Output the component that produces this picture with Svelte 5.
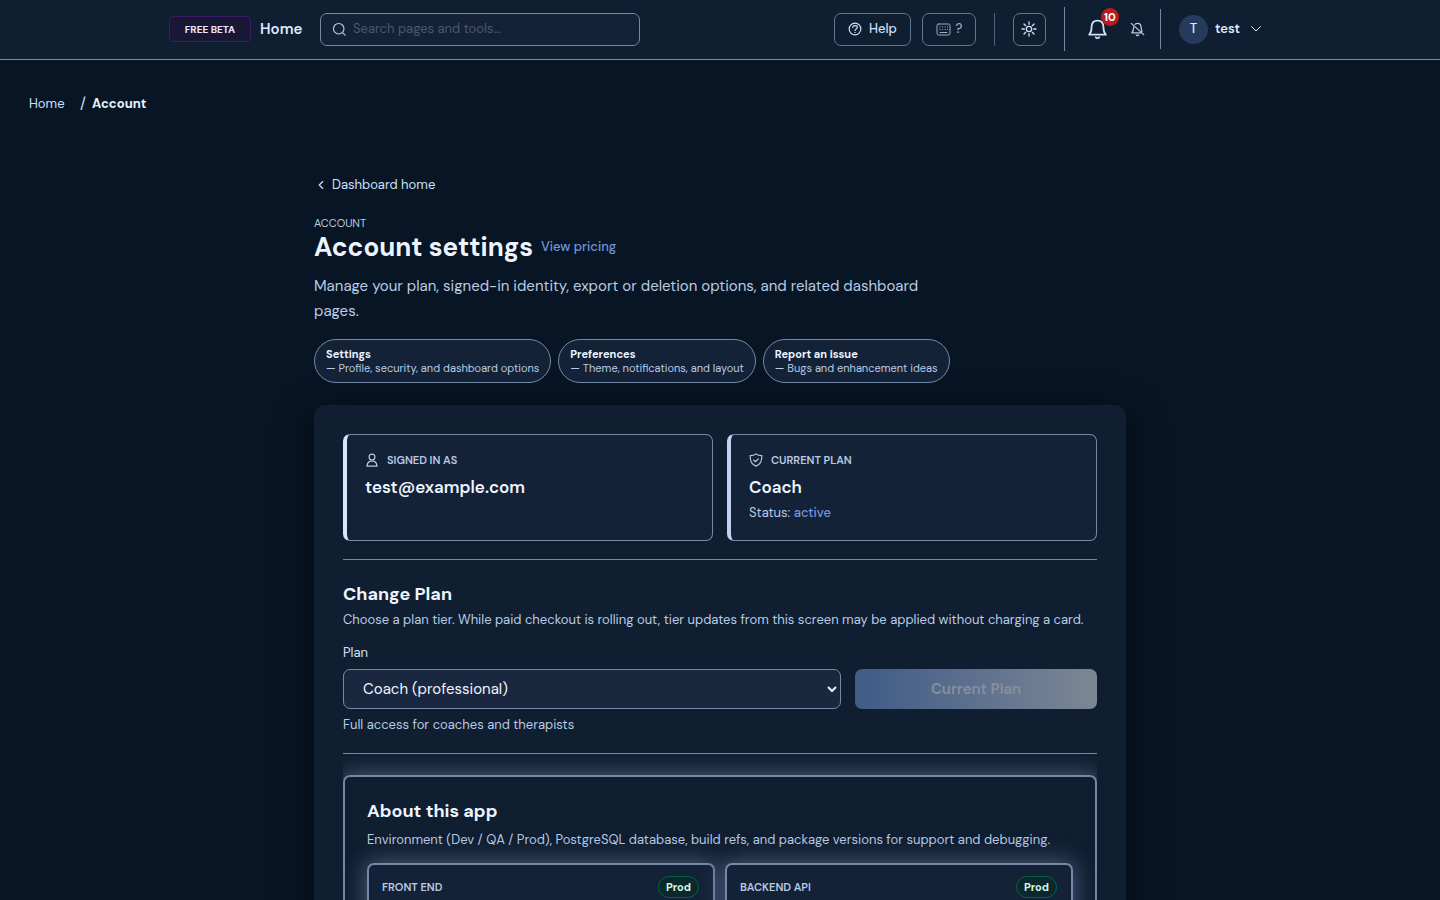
<script>
	const quickLinks = [
		{ title: 'Settings', text: 'Profile, security, and dashboard options' },
		{ title: 'Preferences', text: 'Theme, notifications, and layout' },
		{ title: 'Report an issue', text: 'Bugs and enhancement ideas' }
	];

	const plans = [
		{ id: 'coach', label: 'Coach (professional)', hint: 'Full access for coaches and therapists' }
	];

	const builds = [
		{ name: 'Front end', env: 'Prod' },
		{ name: 'Backend API', env: 'Prod' }
	];

	let search = $state('');
	let planId = $state('coach');
	let currentPlan = 'coach';
	let selected = $derived(plans.find((p) => p.id === planId));
</script>

<svelte:head>
	<title>Account settings</title>
</svelte:head>

<div class="page">
	<header class="topbar">
		<div class="topbar-inner">
			<span class="beta">FREE BETA</span>
			<a class="brand" href="/">Home</a>
			<label class="search">
				<svg class="icon" width="14" height="14" viewBox="0 0 24 24" aria-hidden="true">
					<circle cx="11.500" cy="11.500" r="9" />
					<path d="M18.500 18.500l4 4" />
				</svg>
				<input type="search" bind:value={search} placeholder="Search pages and tools…" aria-label="Search pages and tools" />
			</label>

			<div class="actions">
				<button class="btn help">
					<svg class="icon" width="14" height="14" viewBox="0 0 24 24" aria-hidden="true">
						<circle cx="12" cy="12" r="10" />
						<path d="M8 9.500c.2-2 1.800-3.200 4-3.200s4 1.300 4 3.200c0 2.500-4 2.500-4 5M12 17.500v.5" />
					</svg>
					Help
				</button>
				<button class="btn keys" aria-label="Keyboard shortcuts">
					<svg class="icon" width="15" height="13" viewBox="0 0 30 26" aria-hidden="true">
						<rect x="2" y="2" width="26" height="22" rx="3" />
						<path d="M8 8h.5M13 8h.5M18 8h.5M23 8h.5M8 13h.5M13 13h.5M18 13h.5M23 13h.5M8 19h14" />
					</svg>
					?
				</button>
				<span class="rule"></span>
				<button class="btn theme" aria-label="Toggle theme">
					<svg class="icon" width="16" height="16" viewBox="0 0 24 24" aria-hidden="true">
						<circle cx="12" cy="12" r="4" />
						<path d="M12 1.500V5M12 19v3.500M1.500 12H5M19 12h3.500M4.500 4.500L7 7M17 17l2.500 2.500M4.500 19.500L7 17M17 7l2.500-2.500" />
					</svg>
				</button>
				<div class="alerts">
					<button class="bell" aria-label="Notifications">
						<svg class="icon" width="21" height="22" viewBox="0 0 24 24" aria-hidden="true">
							<path d="M2.500 18.500h19c-2-2-2.700-4-2.700-8.500 0-4.500-2.600-7.500-6.800-7.500S5.200 5.500 5.200 10c0 4.500-.7 6.500-2.700 8.500zM10 21.500c.8 1.200 3.200 1.200 4 0" />
						</svg>
						<span class="count">10</span>
					</button>
					<button class="mute" aria-label="Mute notifications">
						<svg class="icon" width="15" height="16" viewBox="0 0 24 24" aria-hidden="true">
							<path d="M2 3l20 18M6 8.500c-.3 4.500-.5 7-3 9.500h15M8 4.500c5-3.500 9.500-.8 9.800 4.500.1 3 .4 5 1.400 7M10 21.500c.8 1.200 3.200 1.200 4 0" />
						</svg>
					</button>
				</div>
				<button class="user">
					<span class="avatar">T</span>
					test
					<svg class="icon chevron" width="12" height="12" viewBox="0 0 24 24" aria-hidden="true">
						<path d="M3 7l9 9 9-9" />
					</svg>
				</button>
			</div>
		</div>
	</header>

	<nav class="crumbs" aria-label="Breadcrumb">
		<a href="/">Home</a>
		<span class="slash">/</span>
		<strong>Account</strong>
	</nav>

	<main>
		<a class="back" href="/">
			<svg class="icon" width="14" height="14" viewBox="0 0 24 24" aria-hidden="true">
				<path d="M15 6l-6 6 6 6" />
			</svg>
			Dashboard home
		</a>
		<p class="eyebrow">ACCOUNT</p>
		<div class="title-row">
			<h1>Account settings</h1>
			<a href="/pricing">View pricing</a>
		</div>
		<p class="lead">Manage your plan, signed-in identity, export or deletion options, and related dashboard pages.</p>

		<div class="quick-links">
			{#each quickLinks as link}
				<a class="quick-link" href="/account">
					<strong>{link.title}</strong>
					<span>— {link.text}</span>
				</a>
			{/each}
		</div>

		<div class="panel">
			<div class="tiles">
				<section class="tile">
					<h2 class="tile-label">
						<svg class="icon" width="14" height="14" viewBox="0 0 24 24" aria-hidden="true">
							<circle cx="12" cy="7" r="5" />
							<path d="M3.500 22.500h17c0-4-1.500-7-5-8.500h-7c-3.500 1.500-5 4.500-5 8.500z" />
						</svg>
						SIGNED IN AS
					</h2>
					<p class="tile-value">test@example.com</p>
				</section>
				<section class="tile plan">
					<h2 class="tile-label">
						<svg class="icon" width="14" height="14" viewBox="0 0 24 24" aria-hidden="true">
							<path d="M12 1.500c3 2.500 6 3 10 3 .5 9-2 15-10 18-8-3-10.500-9-10-18 4 0 7-.5 10-3zM8 12l3 3 5-5" />
						</svg>
						CURRENT PLAN
					</h2>
					<p class="tile-value">Coach</p>
					<p class="status">Status: <span>active</span></p>
				</section>
			</div>

			<section class="change">
				<h2>Change Plan</h2>
				<p class="note">Choose a plan tier. While paid checkout is rolling out, tier updates from this screen may be applied without charging a card.</p>
				<label class="plan-label" for="plan">Plan</label>
				<div class="plan-row">
					<select id="plan" bind:value={planId}>
						{#each plans as plan}
							<option value={plan.id}>{plan.label}</option>
						{/each}
					</select>
					<button class="submit" disabled={planId === currentPlan}>Current Plan</button>
				</div>
				<p class="note">{selected.hint}</p>
			</section>

			<div class="about-wrap">
				<section class="about">
					<h2>About this app</h2>
					<p class="note">Environment (Dev / QA / Prod), PostgreSQL database, build refs, and package versions for support and debugging.</p>
					<div class="builds">
						{#each builds as build}
							<article class="build">
								<h3>{build.name}</h3>
								<span class="env">{build.env}</span>
							</article>
						{/each}
					</div>
				</section>
			</div>
		</div>
	</main>
</div>

<style>
	:global(body) {
		background: #081524;
	}

	.page {
		--surface: #0f1e30;
		--raised: #142238;
		--line: #7588a5;
		--text: #edf4ff;
		--soft: #b9cbe4;
		--bright: #cfe0f8;
		--link: #7096dc;
		height: 100vh;
		overflow: hidden;
		background: #081524;
		color: var(--soft);
		font-family: 'DM Sans', Inter, 'Open Sans', sans-serif;
		font-size: 13px;
		line-height: 20px;
	}

	.page * {
		box-sizing: border-box;
	}

	h1, h2, h3, p {
		margin: 0;
	}

	a {
		color: inherit;
		text-decoration: none;
	}

	button, input, select {
		font: inherit;
		color: inherit;
	}

	button {
		display: flex;
		align-items: center;
		justify-content: center;
		padding: 0;
		border: none;
		background: none;
		cursor: pointer;
	}

	.icon {
		flex-shrink: 0;
		fill: none;
		stroke: currentColor;
		stroke-width: 2;
		stroke-linecap: round;
		stroke-linejoin: round;
	}

	.topbar {
		height: 60px;
		background: var(--surface);
		border-bottom: 1px solid var(--line);
	}

	.topbar-inner {
		display: flex;
		align-items: center;
		max-width: 1102px;
		height: 58px;
		margin: 0 auto;
	}

	.beta {
		width: 82px;
		height: 26px;
		border: 1px solid #3b1a68;
		border-radius: 4px;
		background: #181735;
		color: #f0e6ff;
		font-size: 10px;
		font-weight: 700;
		line-height: 25px;
		text-align: center;
	}

	.brand {
		width: 60px;
		margin-left: 9px;
		color: #dceaff;
		font-size: 15px;
		font-weight: 600;
		line-height: 18px;
	}

	.search {
		display: flex;
		align-items: center;
		gap: 7px;
		width: 320px;
		height: 33px;
		padding: 0 11px;
		border: 1px solid var(--line);
		border-radius: 7px;
		background: var(--raised);
	}

	.search input {
		flex: 1;
		min-width: 0;
		padding: 0;
		border: none;
		outline: none;
		background: none;
	}

	.search input::placeholder {
		color: #4c5868;
	}

	.actions {
		display: flex;
		align-items: center;
		margin-left: auto;
	}

	.btn {
		height: 33px;
		border: 1px solid #63758f;
		border-radius: 7px;
		background: var(--surface);
		color: var(--bright);
		font-weight: 500;
	}

	.help {
		gap: 7px;
		width: 77px;
	}

	.btn.keys {
		gap: 5px;
		width: 54px;
		margin-left: 11px;
		color: #9aacc6;
	}

	.rule {
		width: 1px;
		height: 33px;
		margin: 0 18px;
		background: #50617a;
	}

	.theme {
		width: 33px;
	}

	.alerts {
		display: flex;
		align-items: center;
		width: 96px;
		height: 44px;
		margin-left: 18px;
		padding-left: 22px;
		border-left: 1px solid var(--line);
		color: var(--bright);
	}

	.bell {
		position: relative;
	}

	.count {
		position: absolute;
		top: -10px;
		right: -11px;
		width: 18px;
		height: 18px;
		border-radius: 50%;
		background: #b91c1c;
		color: #fff;
		font-size: 11px;
		font-weight: 700;
		line-height: 18px;
	}

	.mute {
		margin-left: 22px;
		color: var(--soft);
	}

	.user {
		gap: 7px;
		height: 40px;
		padding: 0 9px 0 18px;
		border-left: 1px solid var(--line);
		color: #dceaff;
		font-weight: 600;
	}

	.avatar {
		width: 29px;
		height: 29px;
		border-radius: 50%;
		background: #263b5b;
		font-weight: 500;
		line-height: 28px;
	}

	.chevron {
		margin-left: 3px;
	}

	.crumbs {
		display: flex;
		align-items: center;
		padding: 34px 29px 0;
		color: var(--bright);
	}

	.crumbs a {
		width: 51px;
	}

	.slash {
		width: 12px;
		font-size: 15px;
	}

	.crumbs strong {
		color: var(--text);
		font-weight: 700;
	}

	main {
		max-width: 812px;
		margin: 61px auto 0;
	}

	.back {
		display: flex;
		align-items: center;
		gap: 4px;
		color: var(--bright);
	}

	.eyebrow {
		margin-top: 20px;
		font-size: 11px;
		line-height: 16px;
	}

	.title-row {
		display: flex;
		align-items: center;
		gap: 8px;
		height: 32px;
	}

	h1 {
		color: var(--text);
		font-size: 26px;
		font-weight: 700;
		line-height: 32px;
	}

	.title-row a {
		color: var(--link);
		font-weight: 500;
	}

	.lead {
		max-width: 640px;
		margin-top: 11px;
		font-size: 15px;
		line-height: 25px;
	}

	.quick-links {
		display: flex;
		gap: 7px;
		margin-top: 15px;
	}

	.quick-link {
		height: 44px;
		padding: 7px 11px;
		border: 1px solid var(--line);
		border-radius: 22px;
		background: var(--raised);
		font-size: 11px;
		line-height: 14px;
	}

	.quick-link strong,
	.quick-link span {
		display: block;
	}

	.quick-link strong {
		color: var(--text);
		font-weight: 700;
	}

	.panel {
		margin-top: 22px;
		padding: 29px;
		border-radius: 11px;
		background: var(--surface);
		box-shadow: 0 11px 36px rgba(0, 0, 0, 0.6);
	}

	.tiles {
		display: grid;
		grid-template-columns: 1fr 1fr;
		gap: 14px;
		padding-bottom: 18px;
		border-bottom: 1px solid var(--line);
	}

	.tile {
		height: 107px;
		padding: 15px 18px;
		border: 1px solid var(--line);
		border-left: 4px solid #d5e6ff;
		border-radius: 7px;
		background: var(--raised);
	}

	.plan {
		border-left-color: #bfd3f2;
	}

	.tile-label {
		display: flex;
		align-items: center;
		gap: 8px;
		font-size: 11px;
		font-weight: 600;
		line-height: 20px;
	}

	.tile-value {
		margin-top: 5px;
		color: var(--text);
		font-size: 17px;
		font-weight: 600;
		line-height: 24px;
	}

	.status {
		margin-top: 4px;
	}

	.status span {
		color: var(--link);
		font-weight: 500;
	}

	.change {
		padding: 22px 0 18px;
		border-bottom: 1px solid var(--line);
	}

	.change h2,
	.about h2 {
		color: var(--text);
		font-size: 18px;
		font-weight: 700;
		line-height: 24px;
	}

	.change h2 + .note {
		margin-top: 4px;
	}

	.plan-label {
		display: block;
		margin-top: 13px;
		color: var(--bright);
	}

	.plan-row {
		display: grid;
		grid-template-columns: 1fr 242px;
		gap: 14px;
		margin: 6px 0;
	}

	select {
		height: 40px;
		padding: 0 0 0 15px;
		border: 1px solid var(--line);
		border-radius: 7px;
		background: #19273f;
		color: var(--text);
		font-size: 15px;
	}

	.submit {
		border-radius: 7px;
		background: linear-gradient(90deg, #3f5b87, #7c8795);
		color: #88909d;
		font-size: 15px;
		font-weight: 600;
	}

	/* clips the glow of the about box to the panel's content width */
	.about-wrap {
		overflow: hidden;
		padding-top: 21px;
	}

	.about {
		padding: 22px;
		border: 2px solid var(--line);
		border-radius: 7px;
		box-shadow: 0 0 22px 2px #465876;
	}

	.about .note {
		margin-top: 7px;
	}

	.builds {
		display: grid;
		grid-template-columns: 1fr 1fr;
		gap: 10px;
		margin-top: 13px;
	}

	.build {
		display: flex;
		align-items: flex-start;
		justify-content: space-between;
		min-height: 120px;
		padding: 11px 14px 11px 13px;
		border: 2px solid var(--line);
		border-radius: 7px;
		background: var(--raised);
		box-shadow: 0 0 22px 2px #465876;
	}

	h3 {
		font-size: 11px;
		font-weight: 600;
		line-height: 22px;
		text-transform: uppercase;
	}

	.env {
		padding: 0 7px;
		border: 1px solid #086044;
		border-radius: 11px;
		background: #0b292c;
		color: #d1fae5;
		font-size: 11px;
		font-weight: 700;
	}
</style>
